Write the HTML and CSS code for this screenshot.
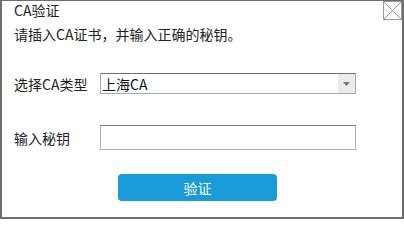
FILE: index.html
```html
<!DOCTYPE html>
<html>
<head>
<meta charset="utf-8">
<link rel="stylesheet" href="styles.css">
</head>
<body>
<div class="dialog">
  <div class="title-bar">
    <span class="title">CA验证</span>
    <span class="close"><svg width="19" height="19" viewBox="0 0 19 19"><rect x="0.5" y="0.5" width="18" height="18" fill="#fff" stroke="#999"/><path d="M1 1L18 18M18 1L1 18" stroke="#999" stroke-width="1"/></svg></span>
  </div>
  <p class="hint">请插入CA证书，并输入正确的秘钥。</p>
  <div class="row row-select">
    <span class="label">选择CA类型</span>
    <div class="select">
      <span class="select-value">上海CA</span>
      <span class="select-arrow"><svg width="7" height="4" viewBox="0 0 7 4"><path d="M0 0H7L3.5 4Z" fill="#777"/></svg></span>
    </div>
  </div>
  <div class="row row-input">
    <span class="label">输入秘钥</span>
    <div class="input"></div>
  </div>
  <div class="actions">
    <button class="btn">验证</button>
  </div>
</div>
</body>
</html>
```
FILE: styles.css
```css
* { box-sizing: border-box; }
html, body { margin: 0; padding: 0; background: #fff; }
body { font-family: "Noto Sans CJK SC", "Liberation Sans", sans-serif; color: #222; font-size: 14px; }
.dialog {
  width: 404px; height: 219px;
  border: 2px solid #6e6e6e; border-top-width: 1px;
  position: relative;
  padding: 0 0 0 12px;
}
.title-bar { height: 19px; display: flex; align-items: center; }
.title { font-size: 14px; line-height: 19px; }
.close { position: absolute; top: 0; right: 0; width: 19px; height: 19px; }
.close svg { display: block; }
.hint { margin: 5px 0 0 0; line-height: 18px; }
.row { display: flex; align-items: center; }
.row-select { margin-top: 30px; }
.row-input { margin-top: 31px; }
.label { width: 86px; line-height: 18px; }
.select {
  width: 256px; height: 21px;
  border: 1px solid #a9a9a9; border-top-color: #707070;
  display: flex; align-items: center; justify-content: space-between;
}
.select-value { padding-left: 1px; font-size: 14px; color: #111; line-height: 18px; }
.select-arrow {
  width: 17px; height: 19px; background: #ececec;
  display: flex; align-items: center; justify-content: center;
}
.input {
  width: 256px; height: 25px;
  border: 1px solid #b0b0b0; border-top-color: #777;
}
.actions { margin-top: 24px; padding-left: 104px; }
.btn {
  width: 159px; height: 27px; border: 0; border-radius: 4px;
  background: #189bd8; color: #fff; font-family: inherit; font-size: 14px;
  padding: 0;
}
```
